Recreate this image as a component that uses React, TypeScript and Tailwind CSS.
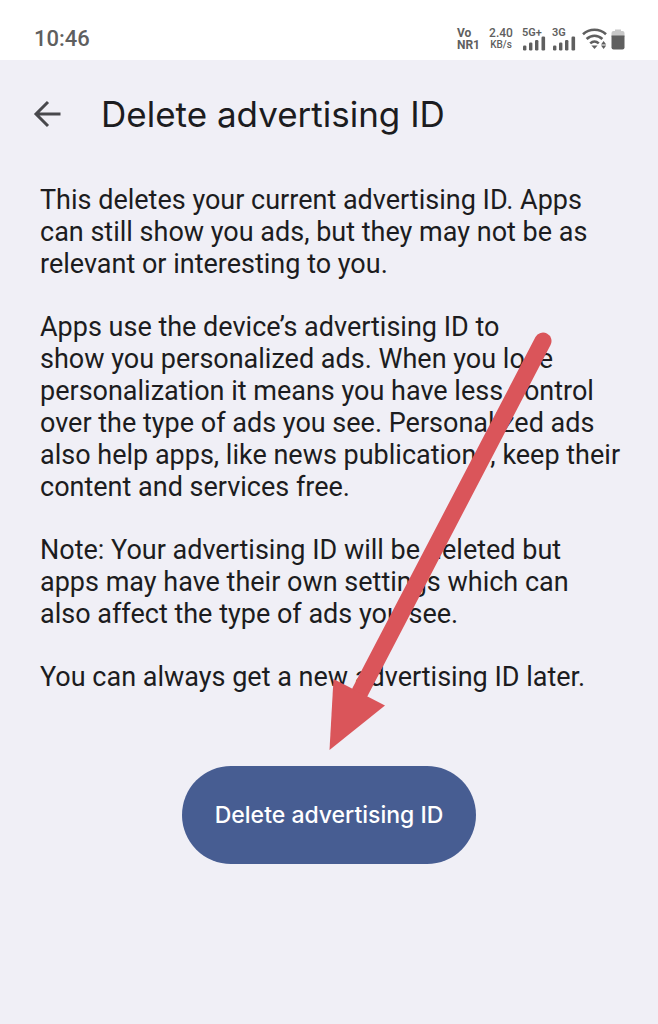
import React from "react";

function Bars() {
  return (
    <svg width="24" height="15" viewBox="0 0 24 15" fill="#5f5f5f" aria-hidden="true">
      <rect x="1" y="9.5" width="3.4" height="5" rx="1.2" />
      <rect x="7" y="6.5" width="3.4" height="8" rx="1.2" />
      <rect x="13" y="4" width="3.4" height="10.5" rx="1.2" />
      <rect x="19.5" y="0.5" width="3.6" height="14" rx="1.2" />
    </svg>
  );
}

function Signal({ label }: { label: string }) {
  return (
    <div className="relative flex h-6 w-6 items-end">
      <span className="absolute top-0 left-0 text-[11px] leading-3 font-semibold">{label}</span>
      <Bars />
    </div>
  );
}

function WifiIcon() {
  return (
    <svg width="26" height="22" viewBox="0 0 26 22" fill="none" stroke="#5f5f5f" strokeWidth="2.6" aria-hidden="true">
      <path d="M1 6.2C7.5 0.2 17.5 0.2 24 6.2" />
      <path d="M4.6 11C9.4 6.6 15.6 6.6 20.4 11" />
      <path d="M8.2 15.4C10.9 13 14.1 13 16.8 15.4" />
      <path d="M9.4 17.4h6.200l-3.100 3.600z" fill="#5f5f5f" stroke="none" />
      <path d="M21.6 13l2.600 3.600h-5.200zM21.600 21l2.600-3.600h-5.200z" fill="#5f5f5f" stroke="none" />
    </svg>
  );
}

function BatteryIcon() {
  return (
    <svg width="14" height="21" viewBox="0 0 14 21" aria-hidden="true">
      <path d="M4 0.5h6v1.5h1.5a2 2 0 0 1 2 2V8H0.5V4a2 2 0 0 1 2-2H4z" fill="#c8c8c8" />
      <path d="M0.5 6.5h13V18.5a2 2 0 0 1-2 2h-9a2 2 0 0 1-2-2z" fill="#5f5f5f" />
    </svg>
  );
}

function StatusBar() {
  return (
    <div className="flex h-15 items-center justify-between bg-white pt-[18px] pr-[33px] pl-[34px] text-[#5f5f5f]">
      <span className="text-[22px] leading-6 font-medium">10:46</span>
      <div className="flex items-center">
        <div className="mr-2 text-[12px] leading-3 font-bold">
          Vo
          <br />
          NR1
        </div>
        <div className="mr-2 w-[26px] text-center font-medium">
          <div className="text-[12px] leading-3">2.40</div>
          <div className="text-[10px] leading-3">KB/s</div>
        </div>
        <div className="mr-1.5 flex gap-1.5">
          <Signal label="5G+" />
          <Signal label="3G" />
        </div>
        <div className="flex items-center gap-[3px]">
          <WifiIcon />
          <BatteryIcon />
        </div>
      </div>
    </div>
  );
}

function PointerArrow() {
  return (
    <svg
      className="pointer-events-none absolute top-[332px] left-1/2 h-[420px] w-[224px]"
      viewBox="329 332 224 420"
      aria-hidden="true"
    >
      <path d="M543 341L360 692" stroke="#da555a" strokeWidth="17" strokeLinecap="round" />
      <path d="M329.5 750L333.5 679L385 705.5z" fill="#da555a" />
    </svg>
  );
}

export default function App() {
  return (
    <div className="relative min-h-screen bg-[#f0eff6] font-['Roboto',sans-serif] text-[#1c1c20]">
      <StatusBar />
      <header className="flex h-27 items-center gap-[37px] pl-8">
        <button type="button" aria-label="Back" className="flex w-8 justify-center">
          <svg width="32" height="32" viewBox="0 0 32 32" fill="none" stroke="#48484c" strokeWidth="3" aria-hidden="true">
            <path d="M28.5 16H4M16 4L4 16l12 12" />
          </svg>
        </button>
        <h1 className="font-['Inter',sans-serif] text-[35px] leading-10">Delete advertising ID</h1>
      </header>
      <main className="pt-4">
        <div className="flex flex-col gap-[31px] pr-8 pl-10 text-[27px] leading-8">
          <p>
            This deletes your current advertising ID. Apps
            <br />
            can still show you ads, but they may not be as
            <br />
            relevant or interesting to you.
          </p>
          <p>
            Apps use the device’s advertising ID to
            <br />
            show you personalized ads. When you lose
            <br />
            personalization it means you have less control
            <br />
            over the type of ads you see. Personalized ads
            <br />
            also help apps, like news publications, keep their
            <br />
            content and services free.
          </p>
          <p>
            Note: Your advertising ID will be deleted but
            <br />
            apps may have their own settings which can
            <br />
            also affect the type of ads you see.
          </p>
          <p>You can always get a new advertising ID later.</p>
        </div>
        <div className="mt-[73px] flex justify-center">
          <button
            type="button"
            className="h-[98px] rounded-full bg-[#475d92] px-[33px] font-['Inter',sans-serif] text-[23px] font-medium text-white"
          >
            Delete advertising ID
          </button>
        </div>
      </main>
      <PointerArrow />
    </div>
  );
}
